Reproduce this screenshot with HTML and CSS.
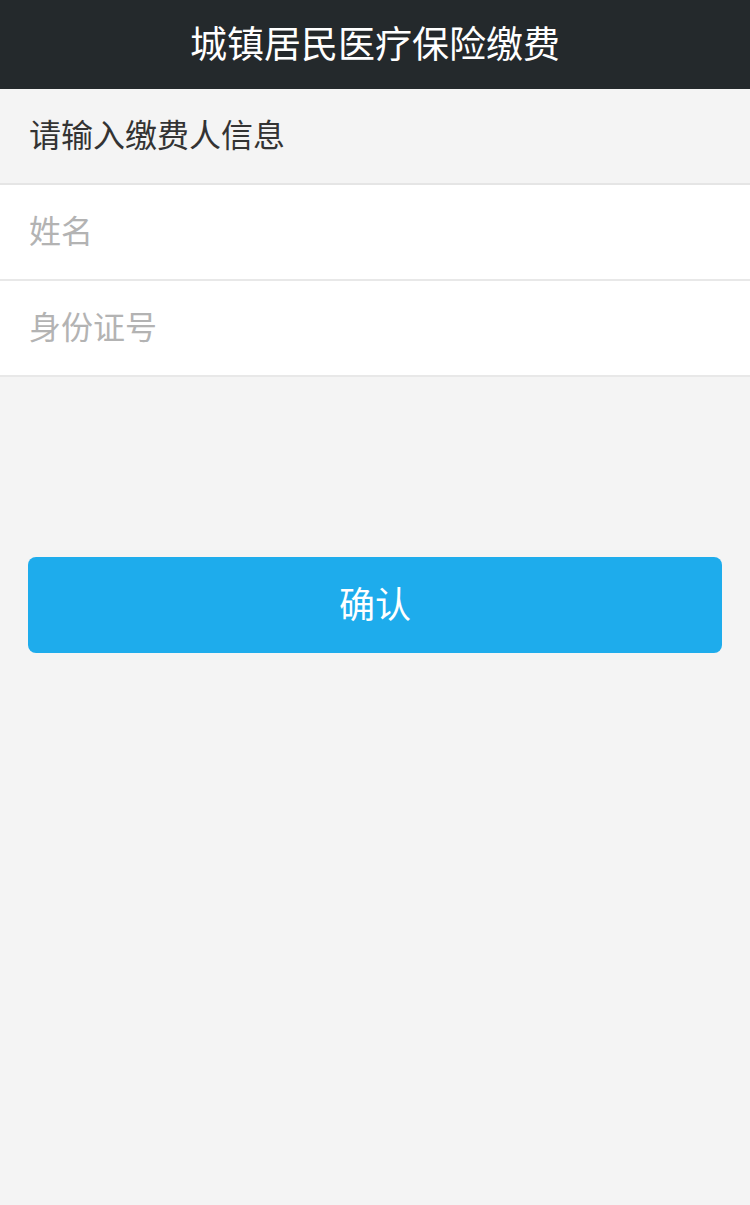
FILE: index.html
```html
<!DOCTYPE html>
<html lang="zh-CN">
<head>
<meta charset="utf-8">
<title>城镇居民医疗保险缴费</title>
<link rel="stylesheet" href="styles.css">
</head>
<body>
<header class="topbar">城镇居民医疗保险缴费</header>
<div class="section-title">请输入缴费人信息</div>
<div class="form">
  <div class="row"><input class="field" type="text" placeholder="姓名"></div>
  <div class="row"><input class="field" type="text" placeholder="身份证号"></div>
</div>
<div class="actions">
  <button class="btn" type="button">确认</button>
</div>
</body>
</html>
```
FILE: styles.css
```css
html, body {
  margin: 0;
  padding: 0;
  background: #f4f4f4;
  font-family: "Noto Sans CJK SC", "Noto Sans", sans-serif;
  height: 100%;
}
.topbar {
  height: 89px;
  box-sizing: border-box;
  padding-bottom: 6px;
  background: #24292c;
  color: #ffffff;
  font-size: 37px;
  display: flex;
  align-items: center;
  justify-content: center;
}
.section-title {
  height: 96px;
  box-sizing: border-box;
  padding-left: 29px;
  padding-bottom: 6px;
  display: flex;
  align-items: center;
  font-size: 32px;
  color: #333333;
  border-bottom: 2px solid #e5e5e5;
}
.form {
  background: #ffffff;
}
.row {
  height: 96px;
  box-sizing: border-box;
  border-bottom: 2px solid #e8e8e8;
  display: flex;
  align-items: center;
  padding-left: 29px;
  padding-bottom: 6px;
}
.field {
  border: none;
  outline: none;
  background: transparent;
  font-family: inherit;
  font-size: 32px;
  color: #333;
  width: 100%;
  padding: 0;
}
.field::placeholder {
  color: #b3b3b3;
}
.actions {
  padding: 180px 28px 0;
}
.btn {
  width: 100%;
  height: 96px;
  border: none;
  border-radius: 8px;
  background: #1eacec;
  color: #ffffff;
  font-family: inherit;
  font-size: 36px;
  padding: 0 0 6px;
}
```
